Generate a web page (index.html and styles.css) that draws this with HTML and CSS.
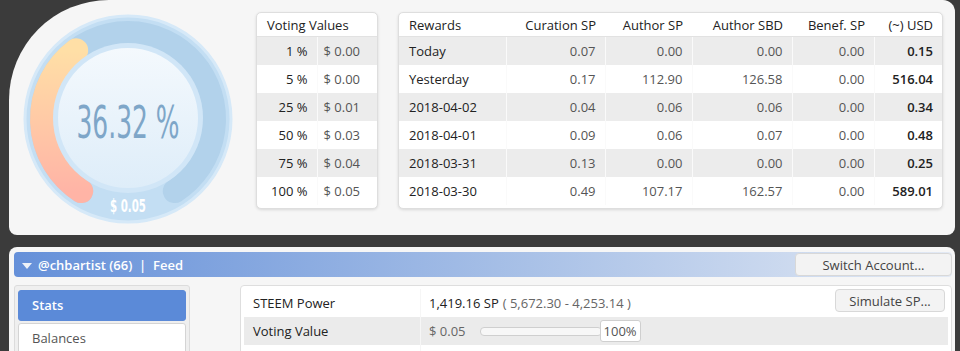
FILE: index.html
```html
<!DOCTYPE html>
<html lang="en">
<head>
  <meta charset="UTF-8">
  <title>SteemWorld</title>
  <link rel="stylesheet" href="styles.css">
</head>
<body>

  <div class="top-panel">
    <svg class="gauge" width="238" height="235" viewBox="0 0 238 235">
      <defs>
        <linearGradient id="arcGrad" x1="0" y1="0" x2="0" y2="1">
          <stop offset="0" stop-color="#ffdfa6"/>
          <stop offset="1" stop-color="#ffb4a6"/>
        </linearGradient>
        <linearGradient id="faceGrad" x1="0" y1="0" x2="0" y2="1">
          <stop offset="0" stop-color="#f4f9fd"/>
          <stop offset="1" stop-color="#deedf9"/>
        </linearGradient>
      </defs>
      <circle cx="119" cy="119" r="103" fill="#c3def3" stroke="#d6e9f8" stroke-width="3"/>
      <path d="M72.2 191.1 A86 86 0 1 1 165.8 191.1" fill="none" stroke="#b2d2eb" stroke-width="24" stroke-linecap="round"/>
      <path d="M72.2 191.1 A86 86 0 0 1 67.2 50.3" fill="none" stroke="url(#arcGrad)" stroke-width="24" stroke-linecap="round"/>
      <circle cx="119" cy="118" r="75" fill="#d1e6f7"/>
      <circle cx="119" cy="118" r="70" fill="url(#faceGrad)"/>
      <text class="gauge-pct" x="119" y="138" text-anchor="middle" textLength="103" lengthAdjust="spacingAndGlyphs">36.32 %</text>
      <text class="gauge-usd" x="119" y="212" text-anchor="middle" textLength="36" lengthAdjust="spacingAndGlyphs">$ 0.05</text>
    </svg>

    <div class="card voting">
      <table>
        <tr><th colspan="2">Voting Values</th></tr>
        <tr class="odd"><td class="pct">1 %</td><td>$ 0.00</td></tr>
        <tr><td class="pct">5 %</td><td>$ 0.00</td></tr>
        <tr class="odd"><td class="pct">25 %</td><td>$ 0.01</td></tr>
        <tr><td class="pct">50 %</td><td>$ 0.03</td></tr>
        <tr class="odd"><td class="pct">75 %</td><td>$ 0.04</td></tr>
        <tr><td class="pct">100 %</td><td>$ 0.05</td></tr>
      </table>
    </div>

    <div class="card rewards">
      <table>
        <colgroup>
          <col style="width:107px"><col style="width:99px"><col style="width:87px">
          <col style="width:100px"><col style="width:82px"><col style="width:68px">
        </colgroup>
        <tr>
          <th class="name">Rewards</th><th>Curation SP</th><th>Author SP</th>
          <th>Author SBD</th><th>Benef. SP</th><th>(~) USD</th>
        </tr>
        <tr class="odd"><td class="name">Today</td><td>0.07</td><td>0.00</td><td>0.00</td><td>0.00</td><td class="usd">0.15</td></tr>
        <tr><td class="name">Yesterday</td><td>0.17</td><td>112.90</td><td>126.58</td><td>0.00</td><td class="usd">516.04</td></tr>
        <tr class="odd"><td class="name">2018-04-02</td><td>0.04</td><td>0.06</td><td>0.06</td><td>0.00</td><td class="usd">0.34</td></tr>
        <tr><td class="name">2018-04-01</td><td>0.09</td><td>0.06</td><td>0.07</td><td>0.00</td><td class="usd">0.48</td></tr>
        <tr class="odd"><td class="name">2018-03-31</td><td>0.13</td><td>0.00</td><td>0.00</td><td>0.00</td><td class="usd">0.25</td></tr>
        <tr><td class="name">2018-03-30</td><td>0.49</td><td>107.17</td><td>162.57</td><td>0.00</td><td class="usd">589.01</td></tr>
      </table>
    </div>
  </div>

  <div class="account-panel">
    <div class="account-bar">
      <div class="account-title"><span class="caret"></span>@chbartist (66) &nbsp;| &nbsp;Feed</div>
      <button class="btn switch-btn">Switch Account...</button>
    </div>

    <div class="account-body">
      <div class="side-menu">
        <div class="menu-item active">Stats</div>
        <div class="menu-item">Balances</div>
      </div>

      <div class="stats-box">
        <div class="stats-row">
          <div class="stats-label">STEEM Power</div>
          <div class="stats-value"><b>1,419.16 SP</b> <span class="muted">( 5,672.30 - 4,253.14 )</span></div>
          <button class="btn sim-btn">Simulate SP...</button>
        </div>
        <div class="stats-row odd">
          <div class="stats-label">Voting Value</div>
          <div class="stats-value">
            <span class="muted">$ 0.05</span>
            <span class="slider"></span>
            <span class="slider-pct">100%</span>
          </div>
        </div>
        <div class="stats-row">
          <div class="stats-label"></div>
          <div class="stats-value"></div>
        </div>
      </div>
    </div>
  </div>

</body>
</html>
```

FILE: styles.css
```css
body {
  margin: 0;
  padding: 0 5px 0 9px;
  background: #3b3b3b;
  font-family: "Open Sans", Arial, sans-serif;
  font-size: 13px;
  color: #333;
  overflow: hidden;
}

/* top panel */
.top-panel {
  display: flex;
  align-items: flex-start;
  height: 235px;
  background: #f6f6f6;
  border-radius: 100px 12px 8px 8px;
}

.gauge {
  flex: none;
}

.gauge-pct {
  font-family: "Liberation Sans Narrow", "DejaVu Sans Condensed", sans-serif;
  font-size: 44px;
  fill: #7ea6c8;
}

.gauge-usd {
  font-family: "Liberation Sans Narrow", "DejaVu Sans Condensed", sans-serif;
  font-size: 17px;
  font-weight: bold;
  fill: #fff;
}

.card {
  margin-top: 12px;
  background: #fff;
  border: 1px solid #dedede;
  border-radius: 5px;
  box-shadow: 0 1px 3px rgba(0,0,0,0.12);
  padding: 0 0 3px;
}

.card table {
  border-collapse: collapse;
  table-layout: fixed;
}

.card th {
  height: 23px;
  font-weight: normal;
  color: #222;
  border-bottom: 1px solid #e2e2e2;
  padding: 0 9px 0 10px;
  text-align: right;
}

.card td {
  height: 28px;
  padding: 0 9px 0 10px;
  text-align: right;
  color: #555;
  border-right: 1px solid #fafafa;
}

.card td:last-child {
  border-right: none;
}

.card tr.odd td {
  background: #ececec;
}

.voting {
  width: 120px;
  margin-left: 9px;
}

.voting table {
  width: 120px;
}

.voting th {
  text-align: left;
}

.voting td {
  text-align: left;
  padding: 0 0 0 6px;
}

.voting td.pct {
  width: 50px;
  padding: 0 9px 0 0;
  text-align: right;
  color: #222;
}

.rewards {
  width: 543px;
  margin-left: 20px;
}

.rewards table {
  width: 543px;
}

.rewards .name {
  text-align: left;
  color: #222;
}

.rewards td.usd {
  color: #222;
  font-weight: 600;
}

/* account panel */
.account-panel {
  margin-top: 12px;
  height: 99px;
  overflow: hidden;
  background: #f6f6f6;
  border-radius: 8px 8px 0 0;
  padding: 5px 3px 0 5px;
}

.account-bar {
  display: flex;
  align-items: center;
  justify-content: space-between;
  height: 25px;
  border-radius: 4px;
  background: linear-gradient(90deg, #6590d9 0%, #a9c1e7 55%, #e2e9f4 100%);
}

.account-title {
  display: flex;
  align-items: center;
  color: #fff;
  font-weight: 600;
  font-size: 13px;
  padding-left: 8px;
}

.caret {
  width: 0;
  height: 0;
  border-left: 5px solid transparent;
  border-right: 5px solid transparent;
  border-top: 6px solid #eef2f8;
  margin-right: 6px;
  margin-top: 2px;
}

.btn {
  font-family: "Open Sans", Arial, sans-serif;
  font-size: 13px;
  color: #444;
  background: #f3f3f3;
  border: 1px solid #d8d8d8;
  border-radius: 4px;
  cursor: pointer;
}

.switch-btn {
  width: 157px;
  height: 23px;
  padding: 0;
}

.account-body {
  display: flex;
  align-items: flex-start;
  margin-top: 8px;
}

.side-menu {
  width: 168px;
  height: 80px;
  padding: 4px 3px;
  background: #efefef;
  border: 1px solid #dcdcdc;
  border-radius: 3px;
}

.menu-item {
  height: 29px;
  line-height: 29px;
  padding-left: 13px;
  color: #555;
  background: #fff;
  border: 1px solid #d4d4d4;
  border-radius: 3px;
  margin-bottom: 2px;
}

.menu-item.active {
  background: #5b8ad8;
  border-color: #5b8ad8;
  color: #fff;
  font-weight: 600;
}

.stats-box {
  margin-left: 50px;
  width: 704px;
  height: 80px;
  padding: 3px;
  background: #fff;
  border: 1px solid #dedede;
  border-radius: 4px;
}

.stats-row {
  display: flex;
  align-items: center;
  height: 28px;
}

.stats-row.odd {
  background: #ebebeb;
}

.stats-label {
  width: 167px;
  padding-left: 9px;
  align-self: stretch;
  display: flex;
  align-items: center;
  color: #222;
  border-right: 1px solid #f6f6f6;
}

.stats-value {
  flex: 1;
  display: flex;
  align-items: center;
  padding-left: 8px;
  color: #222;
}

.stats-value b {
  font-weight: normal;
  margin-right: 4px;
}

.muted {
  color: #666;
}

.sim-btn {
  align-self: flex-start;
  width: 110px;
  height: 23px;
  padding: 0;
  margin-right: 3px;
}

.slider {
  display: inline-block;
  width: 120px;
  height: 7px;
  margin-left: 14px;
  background: #f7f7f7;
  border: 1px solid #cfcfcf;
  border-radius: 4px;
}

.slider-pct {
  display: inline-block;
  margin-left: -2px;
  padding: 0 3px;
  height: 20px;
  line-height: 20px;
  background: #fff;
  border: 1px solid #cfcfcf;
  border-radius: 3px;
  color: #555;
}
```
